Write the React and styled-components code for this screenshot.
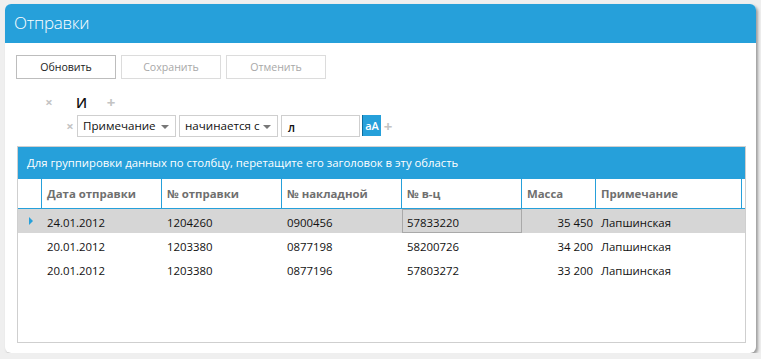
import React from 'react';
import styled, { createGlobalStyle } from 'styled-components';

const GlobalStyle = createGlobalStyle`
    body {
        margin: 0;
        background: #efefef;
        font-family: 'Open Sans', 'Noto Sans', sans-serif;
    }
`;

const Panel = styled.section`
    margin: 4px 0 0 5px;
    width: 751px;
    height: 349px;
    background: #fff;
    border-radius: 6px;
    box-shadow: 2px 2px 3px rgba(0, 0, 0, 0.35);
    overflow: hidden;
    display: flex;
    flex-direction: column;
`;

const Header = styled.header`
    height: 39px;
    background: #26a0da;
    color: #fff;
    font-size: 17px;
    font-weight: 300;
    letter-spacing: -0.3px;
    line-height: 38px;
    padding-left: 9px;
`;

const Body = styled.div`
    padding: 12px 11px 0 11px;
    display: flex;
    flex-direction: column;
`;

const Toolbar = styled.div`
    display: flex;
    gap: 5px;
`;

const Button = styled.button`
    width: 100px;
    height: 24px;
    background: #fff;
    border: 1px solid ${p => (p.disabled ? '#dcdcdc' : '#bdbdbd')};
    color: ${p => (p.disabled ? '#a8a8a8' : '#222')};
    font-family: inherit;
    font-size: 10.6px;
    padding: 0;
`;

const FilterRow = styled.div`
    display: flex;
    align-items: center;
    height: ${p => p.h}px;
    padding-left: ${p => p.indent}px;
    margin-top: ${p => p.top}px;
`;

const Icon = styled.span`
    color: #c4c4c4;
    font-size: ${p => (p.plus ? 15 : 13)}px;
    font-weight: bold;
    width: ${p => p.w}px;
    margin-left: ${p => p.gap || 0}px;
    text-align: center;
`;

const Logic = styled.span`
    font-size: 14px;
    font-weight: 600;
    color: #111;
    margin-left: 22px;
    width: 9px;
    text-align: center;
`;

const Select = styled.div`
    width: 99px;
    height: 22px;
    box-sizing: border-box;
    border: 1px solid #cfcfcf;
    display: flex;
    align-items: center;
    justify-content: space-between;
    padding: 0 6px 0 5px;
    font-size: 11.6px;
    white-space: nowrap;
    color: #111;
    margin-right: 3px;
`;

const Arrow = styled.span`
    width: 0;
    height: 0;
    border-left: 4px solid transparent;
    border-right: 4px solid transparent;
    border-top: 4px solid #777;
    margin-top: 2px;
`;

const TextInput = styled.div`
    width: 79px;
    height: 22px;
    box-sizing: border-box;
    border: 1px solid #cfcfcf;
    padding: 4px 0 0 6px;
    font-size: 11.6px;
    font-weight: 600;
    color: #111;
`;

const CaseButton = styled.div`
    width: 19px;
    height: 21px;
    margin-left: 2px;
    background: #26a0da;
    border-left: 1px solid #0c6ea0;
    color: #fff;
    font-size: 11px;
    font-weight: 600;
    display: flex;
    align-items: center;
    justify-content: center;
    box-sizing: border-box;
`;

const Grid = styled.div`
    margin: 9px 0 0 1px;
    width: 729px;
    height: 197px;
    box-sizing: border-box;
    border: 1px solid #cfcfcf;
    display: flex;
    flex-direction: column;
`;

const GroupPanel = styled.div`
    height: 32px;
    background: #26a0da;
    color: #fff;
    font-size: 11.3px;
    line-height: 31px;
    padding-left: 9px;
`;

const HeadRow = styled.div`
    display: flex;
    height: 29px;
    border-bottom: 1px solid #26a0da;
`;

const HeadCell = styled.div`
    width: ${p => p.w}px;
    box-sizing: border-box;
    border-right: 1px solid #26a0da;
    color: #6f6f6f;
    font-size: 11.4px;
    font-weight: bold;
    line-height: 30px;
    padding-left: 5px;
`;

const Row = styled.div`
    display: flex;
    height: 24px;
    background: ${p => (p.selected ? '#d6d6d6' : '#fff')};
`;

const Cell = styled.div`
    width: ${p => p.w}px;
    box-sizing: border-box;
    font-size: 11.4px;
    color: #111;
    line-height: 25px;
    padding: 0 ${p => (p.right ? 2 : 4)}px 0 4px;
    text-align: ${p => (p.right ? 'right' : 'left')};
    border: 1px solid ${p => (p.current ? '#a9a9a9' : 'transparent')};
`;

const Indicator = styled.div`
    width: 24px;
    display: flex;
    align-items: center;
    justify-content: center;
    padding-left: 2px;
    box-sizing: border-box;
`;

const Triangle = styled.span`
    width: 0;
    height: 0;
    border-top: 4px solid transparent;
    border-bottom: 4px solid transparent;
    border-left: 4px solid #26a0da;
`;

const columns = [
    { title: 'Дата отправки', w: 120 },
    { title: '№ отправки', w: 120 },
    { title: '№ накладной', w: 120 },
    { title: '№ в-ц', w: 120 },
    { title: 'Масса', w: 74 },
    { title: 'Примечание', w: 146 },
];

const rows = [
    ['24.01.2012', '1204260', '0900456', '57833220', '35 450', 'Лапшинская'],
    ['20.01.2012', '1203380', '0877198', '58200726', '34 200', 'Лапшинская'],
    ['20.01.2012', '1203380', '0877196', '57803272', '33 200', 'Лапшинская'],
];

function App() {
    return (
        <>
            <GlobalStyle />
            <Panel>
                <Header>Отправки</Header>
                <Body>
                    <Toolbar>
                        <Button>Обновить</Button>
                        <Button disabled>Сохранить</Button>
                        <Button disabled>Отменить</Button>
                    </Toolbar>
                    <FilterRow h={18} indent={28} top={14}>
                        <Icon w={10}>×</Icon>
                        <Logic>И</Logic>
                        <Icon w={10} gap={21} plus>+</Icon>
                    </FilterRow>
                    <FilterRow h={23} indent={47} top={3}>
                        <Icon w={14}>×</Icon>
                        <Select>Примечание <Arrow /></Select>
                        <Select>начинается с <Arrow /></Select>
                        <TextInput>л</TextInput>
                        <CaseButton>аА</CaseButton>
                        <Icon w={14} plus>+</Icon>
                    </FilterRow>
                    <Grid>
                        <GroupPanel>Для группировки данных по столбцу, перетащите его заголовок в эту область</GroupPanel>
                        <HeadRow>
                            <HeadCell w={24} />
                            {columns.map(c => (
                                <HeadCell key={c.title} w={c.w}>{c.title}</HeadCell>
                            ))}
                        </HeadRow>
                        {rows.map((r, i) => (
                            <Row key={i} selected={i === 0}>
                                <Indicator>{i === 0 && <Triangle />}</Indicator>
                                {r.map((v, j) => (
                                    <Cell key={j} w={columns[j].w} right={j === 4} current={i === 0 && j === 3}>{v}</Cell>
                                ))}
                            </Row>
                        ))}
                    </Grid>
                </Body>
            </Panel>
        </>
    );
}

export default App;
